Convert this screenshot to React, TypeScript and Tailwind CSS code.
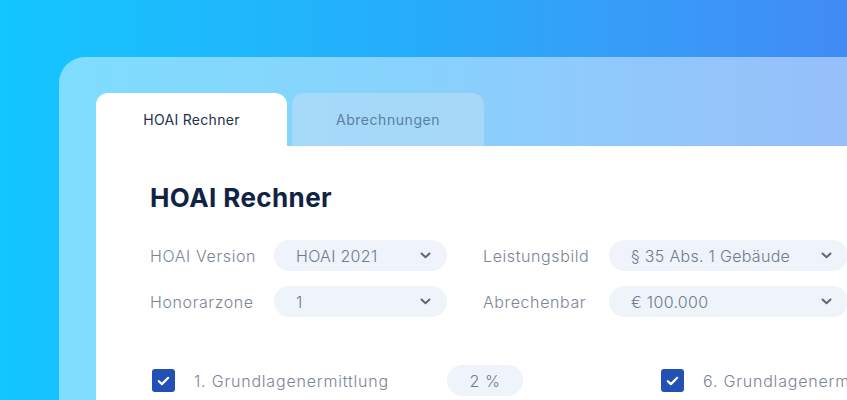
import React from "react";

const font = { fontFamily: "Inter, 'Open Sans', sans-serif" };

function Chevron() {
  return (
    <svg width="11" height="7" viewBox="0 0 11 7" fill="none">
      <path d="M1.5 1.5 L5.5 5.2 L9.5 1.5" stroke="#5d6878" strokeWidth="2" strokeLinecap="round" strokeLinejoin="round" />
    </svg>
  );
}

function Select({ value, w }: { value: string; w: string }) {
  return (
    <div className={`${w} h-[31px] rounded-full bg-[#eef4f9] flex items-center justify-between pl-[22px] pr-[16px] shrink-0`}>
      <span className="text-[16px] tracking-[0.3px] text-[#6e7b8d] font-light whitespace-nowrap">{value}</span>
      <Chevron />
    </div>
  );
}

function Check() {
  return (
    <div className="w-[23px] h-[23px] rounded-[3px] bg-[#2350b4] flex items-center justify-center shrink-0">
      <svg width="13" height="10" viewBox="0 0 13 10" fill="none">
        <path d="M1.8 5.2 L4.9 8.1 L11.2 1.8" stroke="white" strokeWidth="2.2" strokeLinecap="round" strokeLinejoin="round" />
      </svg>
    </div>
  );
}

export default function App() {
  return (
    <div style={font} className="w-[847px] h-[400px] overflow-hidden bg-linear-to-r from-[#12c6fe] via-[#26acfa] to-[#418bf5] pl-[59px] pt-[57px]">
      <div className="w-[820px] h-[400px] rounded-tl-[26px] bg-white/45 pl-[37px] pt-[36px]">
        <div className="flex gap-[5px]">
          <div className="w-[191px] h-[53px] bg-white rounded-t-[12px] flex items-center justify-center">
            <span className="text-[14px] tracking-[0.3px] text-[#22304d]">HOAI Rechner</span>
          </div>
          <div className="w-[192px] h-[53px] bg-[#b3dcf7]/70 rounded-t-[12px] flex items-center justify-center">
            <span className="text-[14px] tracking-[0.55px] text-[#5b7ea3]">Abrechnungen</span>
          </div>
        </div>
        <div className="bg-white h-[300px] pl-[54px] pt-[36px]">
          <h1 className="text-[26px] font-bold text-[#0f2445] leading-[32px] tracking-[0.4px]">HOAI Rechner</h1>
          <div className="mt-[26px] flex flex-col gap-[15px]">
            <div className="flex items-center">
              <span className="w-[124px] shrink-0 text-[16px] tracking-[0.6px] font-light text-[#7c8594]">HOAI Version</span>
              <Select value="HOAI 2021" w="w-[173px]" />
              <span className="ml-[36px] w-[126px] shrink-0 text-[16px] tracking-[0.6px] font-light text-[#7c8594]">Leistungsbild</span>
              <Select value="§ 35 Abs. 1 Gebäude" w="w-[239px]" />
            </div>
            <div className="flex items-center">
              <span className="w-[124px] shrink-0 text-[16px] tracking-[0.6px] font-light text-[#7c8594]">Honorarzone</span>
              <Select value="1" w="w-[173px]" />
              <span className="ml-[36px] w-[126px] shrink-0 text-[16px] tracking-[0.6px] font-light text-[#7c8594]">Abrechenbar</span>
              <Select value="€ 100.000" w="w-[239px]" />
            </div>
          </div>
          <div className="mt-[48px] flex items-center">
            <div className="ml-[2px] flex items-center gap-[19px] w-[295px] shrink-0">
              <Check />
              <span className="text-[16px] tracking-[0.8px] font-light text-[#7c8594] whitespace-nowrap">1. Grundlagenermittlung</span>
            </div>
            <div className="w-[76px] h-[31px] shrink-0 rounded-full bg-[#eef4f9] flex items-center justify-center text-[16px] tracking-[0.5px] font-light text-[#6e7b8d]">2 %</div>
            <div className="ml-[138px] shrink-0 flex items-center gap-[19px]">
              <Check />
              <span className="text-[16px] tracking-[0.8px] font-light text-[#7c8594] whitespace-nowrap">6. Grundlagenermittlung</span>
            </div>
          </div>
        </div>
      </div>
    </div>
  );
}
